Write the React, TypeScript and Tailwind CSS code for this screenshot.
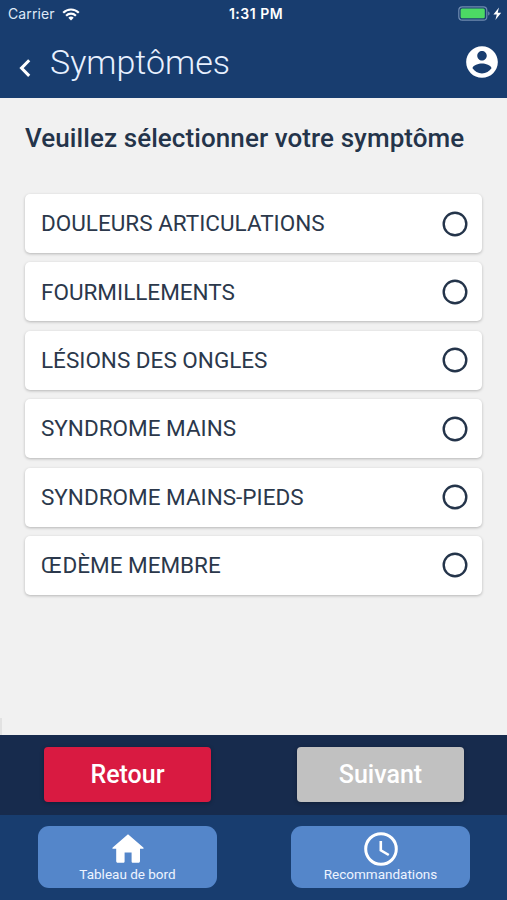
import { useState } from "react";

const symptoms: string[] = [
  "DOULEURS ARTICULATIONS",
  "FOURMILLEMENTS",
  "LÉSIONS DES ONGLES",
  "SYNDROME MAINS",
  "SYNDROME MAINS-PIEDS",
  "ŒDÈME MEMBRE",
];

function StatusBar() {
  return (
    <div className="grid h-7 grid-cols-3 items-center pl-2 pr-[5px] font-['Inter','Roboto',sans-serif] text-[14px] leading-none text-[#dfe9f7]">
      <div className="flex items-center gap-[7px]">
        <span className="tracking-[0.1px]">Carrier</span>
        <svg width="18" height="13" viewBox="0 0 18 13" fill="none" stroke="#fff" strokeWidth="2.2">
          <path d="M1.2 4.8C5.6 0.4 12.4 0.4 16.8 4.8" />
          <path d="M4.1 7.7C6.9 5 11.1 5 13.9 7.7" />
          <path d="M9 12.5L6.3 9.7C7.8 8.2 10.2 8.2 11.7 9.7Z" fill="#fff" stroke="none" />
        </svg>
      </div>
      <span className="pl-[2px] text-center font-semibold tracking-[0.5px] text-white">1:31 PM</span>
      <div className="flex items-center justify-end">
        <svg width="44" height="16" viewBox="0 0 44 16">
          <rect x="0.8" y="0.8" width="28" height="13.4" rx="3.5" fill="none" stroke="#6f8bb0" strokeWidth="1.2" />
          <rect x="2.6" y="2.6" width="24.2" height="9.6" rx="1.5" fill="#4cd964" />
          <path d="M30.2 5.5C32 6 32 9 30.2 9.6Z" fill="#6f8bb0" />
          <path d="M41 1.6L35.4 8.4H38.8L37.4 14L43.2 6.8H39.7Z" fill="#fff" />
        </svg>
      </div>
    </div>
  );
}

function Header() {
  return (
    <div className="flex h-[70px] items-start pl-[18px] pr-[6px]">
      <svg className="mt-[31px]" width="14" height="19" viewBox="0 0 14 19" fill="none" stroke="#fff" strokeWidth="3">
        <path d="M11.2 1.3L3.5 9.1L11.2 16.9" />
      </svg>
      <h1 className="ml-[18px] mt-[13px] text-[34px] font-light leading-[42px] text-[#e8f1ff]">
        Symptômes
      </h1>
      <button className="ml-auto mt-[15px]" aria-label="Profil">
        <svg width="38" height="38" viewBox="0 0 24 24" fill="#fff">
          <path d="M12 2C6.48 2 2 6.48 2 12s4.48 10 10 10 10-4.48 10-10S17.52 2 12 2zm0 3c1.66 0 3 1.34 3 3s-1.34 3-3 3-3-1.34-3-3 1.34-3 3-3zm0 14.2c-2.5 0-4.71-1.28-6-3.22.03-1.99 4-3.08 6-3.08 1.99 0 5.97 1.09 6 3.08-1.29 1.94-3.5 3.22-6 3.22z" />
        </svg>
      </button>
    </div>
  );
}

function Radio({ checked }: { checked: boolean }) {
  return (
    <svg width="26" height="26" viewBox="0 0 26 26" fill="none">
      <circle cx="13" cy="13" r="11.3" stroke="#24344a" strokeWidth="2.4" />
      {checked && <circle cx="13" cy="13" r="6" fill="#24344a" />}
    </svg>
  );
}

export default function App() {
  const [selected, setSelected] = useState<string | null>(null);

  return (
    <div className="flex h-[900px] w-[507px] flex-col overflow-hidden bg-[#f1f1f1] font-['Roboto',sans-serif]">
      <header className="h-[98px] shrink-0 bg-[#183d6f]">
        <StatusBar />
        <Header />
      </header>

      {/* SYMPTOMS */}
      <main className="relative flex-1 px-[25px] pt-[24px]">
        <h2 className="whitespace-nowrap text-[26px] font-medium leading-8 tracking-[0.08px] text-[#24344a]">
          Veuillez sélectionner votre symptôme
        </h2>

        <div className="mt-[40px] flex flex-col gap-[9.4px]">
          {symptoms.map((symptom) => (
            <button
              key={symptom}
              onClick={() => setSelected(symptom)}
              className="flex h-[59px] items-center justify-between rounded-[5px] bg-white pl-4 pr-[14px] text-left text-[22.5px] text-[#2b384b] shadow-[0_1px_3px_rgba(0,0,0,0.25)]"
            >
              <span className="whitespace-nowrap pt-px">{symptom}</span>
              <Radio checked={selected === symptom} />
            </button>
          ))}
        </div>

        {/* edge of the closed side menu */}
        <div className="absolute bottom-0 left-0 h-[17px] w-[2px] bg-[#e2e2e2]" />
      </main>

      {/* ACTIONS */}
      <div className="flex h-[80px] shrink-0 justify-between bg-[#172b4d] pl-[44px] pr-[43px] pt-3">
        <button className="h-[55px] w-[167px] rounded-[4px] bg-[#d91a41] text-[25px] font-medium text-white shadow-[0_1px_4px_rgba(0,0,0,0.3)]">
          Retour
        </button>
        <button className="h-[55px] w-[167px] rounded-[4px] bg-[#c1c1c1] text-[25px] font-medium text-white shadow-[0_1px_4px_rgba(0,0,0,0.3)]">
          Suivant
        </button>
      </div>

      {/* TABS */}
      <nav className="flex h-[85px] shrink-0 justify-between bg-[#183d6f] pl-[38px] pr-[37px] pt-[11px] text-[13.5px] leading-4 text-[#eef4ff]">
        <button className="flex h-[62px] w-[179px] flex-col items-center rounded-[11px] bg-[#5486ca] pt-[6px]">
          <svg width="34" height="34" viewBox="0 0 34 34" fill="#fff">
            <path d="M17 2.2L32.3 15.4C32.9 16 32.6 16.7 31.9 16.7H29V29C29 30.2 28.4 30.8 27.4 30.8H22C21.2 30.8 20.6 30.2 20.6 29.4V20.4H13.6V29.4C13.6 30.2 13 30.8 12.2 30.8H6.8C5.8 30.8 5.2 30.2 5.2 29V16.7H2.1C1.4 16.7 1.1 16 1.7 15.4Z" />
          </svg>
          <span className="whitespace-nowrap">Tableau de bord</span>
        </button>
        <button className="flex h-[62px] w-[179px] flex-col items-center rounded-[11px] bg-[#5486ca] pt-[6px]">
          <svg width="34" height="34" viewBox="0 0 34 34" fill="none" stroke="#fff">
            <circle cx="17" cy="17" r="15.3" strokeWidth="3" />
            <path d="M16.8 9V18.3L24.8 23" strokeWidth="2.6" />
          </svg>
          <span className="whitespace-nowrap">Recommandations</span>
        </button>
      </nav>
    </div>
  );
}
